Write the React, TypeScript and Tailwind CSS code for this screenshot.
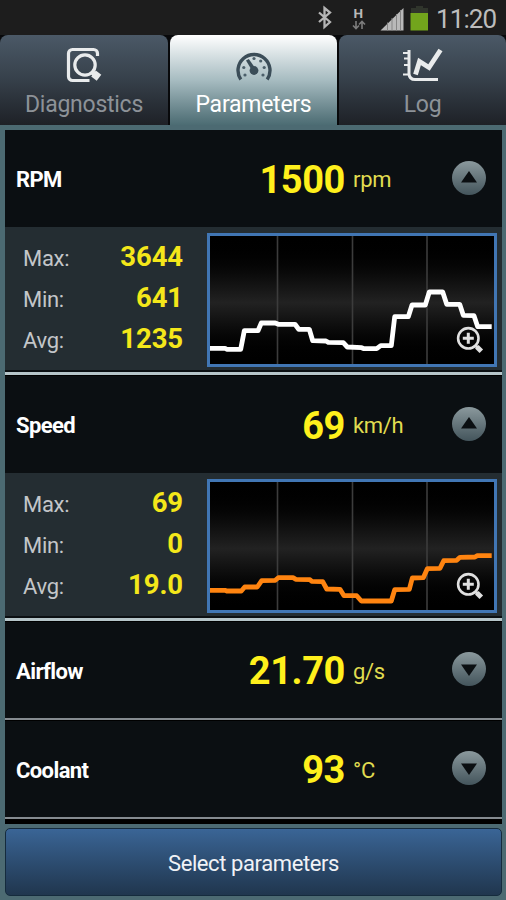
import React from "react";
import clsx from "clsx";

type Parameter = {
  name: string;
  value: string;
  unit: string;
  stats?: { label: string; value: string }[];
  stroke?: string;
  points?: string;
};

const PARAMETERS: Parameter[] = [
  {
    name: "RPM",
    value: "1500",
    unit: "rpm",
    stats: [
      { label: "Max:", value: "3644" },
      { label: "Min:", value: "641" },
      { label: "Avg:", value: "1235" }
    ],
    stroke: "#ffffff",
    points:
      "3,115.3 18,115.3 19.7,116.3 33.7,116.3 37.3,97.7 51,97.7 54.3,90 68.3,90 71.3,91.3 88,91.3 91.7,96.3 102.3,96.3 105.7,107.7 119,108 121.3,109.3 136.3,109.7 140.3,114 154.7,114.7 157,115.7 169.7,115.7 173.7,112.7 184.3,112.7 187.7,83.7 201.3,83.7 205,72 218.3,72 222.3,59 235.7,59 239.7,71.3 252.7,71.3 256.3,82.3 267,82.7 270.7,93.7 284.7,93.7"
  },
  {
    name: "Speed",
    value: "69",
    unit: "km/h",
    stats: [
      { label: "Max:", value: "69" },
      { label: "Min:", value: "0" },
      { label: "Avg:", value: "19.0" }
    ],
    stroke: "#ff8410",
    points:
      "3,111.3 18,111.3 19.7,112 34.3,112 37.7,108 50.3,108 54.7,101.7 68.3,101.3 71.3,98.7 86.3,98.7 88.7,100.3 103,100.7 104.7,102.3 115.7,102.7 119.7,110 133,110.3 137,116.7 149.7,116.7 154.3,122 184.3,122 187.7,110.7 202.3,110.3 205.3,99 216.3,98.7 220.3,89.7 233,89.3 236.7,81.7 249.7,81.3 253,78.3 268,78 270.3,76.7 284.7,76.7"
  },
  { name: "Airflow", value: "21.70", unit: "g/s" },
  { name: "Coolant", value: "93", unit: "°C" }
];

function DiagnosticsIcon() {
  return (
    <svg width="36" height="36" viewBox="0 0 36 36" fill="none">
      <path d="M31.500 9V6.500a4 4 0 0 0-4-4H6.500a4 4 0 0 0-4 4V29.500a4 4 0 0 0 4 4h17" stroke="#e9ebec" strokeWidth="3.200" />
      <circle cx="19" cy="18" r="10.200" stroke="#e9ebec" strokeWidth="3.200" />
      <path d="M26 25l3 2.800" stroke="#e9ebec" strokeWidth="4.500" />
      <path d="M27.500 26.500l5.500 4.200" stroke="#e9ebec" strokeWidth="7.600" />
    </svg>
  );
}

function GaugeIcon() {
  return (
    <svg width="38" height="32" viewBox="0 0 38 32" fill="none">
      <path d="M5.800 30.500a16 16 0 1 1 26.400 0" stroke="#3b4d58" strokeWidth="3.400" />
      <circle cx="19" cy="21.500" r="4.400" fill="#3b4d58" />
      <path d="M11 11.500l2.800-1.600 6.700 9.500-3.500 2z" fill="#3b4d58" />
      <g fill="#4b5f6a">
        <circle cx="10" cy="26" r="1.600" />
        <circle cx="8.800" cy="18.500" r="1.600" />
        <circle cx="19" cy="9.500" r="1.600" />
        <circle cx="25.700" cy="12" r="1.600" />
        <circle cx="29.200" cy="18.500" r="1.600" />
        <circle cx="28" cy="26" r="1.600" />
      </g>
    </svg>
  );
}

function LogIcon() {
  return (
    <svg width="40" height="34" viewBox="0 0 40 34" fill="none" stroke="#e9ebec">
      <path d="M6 2v24q.5 5.500 6 5.500h23" strokeWidth="3" />
      <path d="M0 5h6M1 10.500h5M1 17h5M0 26.500h7" strokeWidth="2.200" />
      <path d="M12.500 26.500L16.500 13.500 26 19.500 37.500 2" strokeWidth="4.800" />
    </svg>
  );
}

const TABS = [
  { label: "Diagnostics", icon: DiagnosticsIcon },
  { label: "Parameters", icon: GaugeIcon, active: true },
  { label: "Log", icon: LogIcon }
];

function StatusBar() {
  return (
    <div className="flex h-[35px] justify-end bg-[#1d1d1d] pt-[3px] pr-[9px]">
      <svg width="120" height="28" viewBox="0 0 120 28" fill="none">
        {/* bluetooth */}
        <path d="M4 9.500l11 9.500-5.500 5v-19L15 9.500 4 19" stroke="#b5b5b5" strokeWidth="2.300" />
        {/* mobile data arrows */}
        <g stroke="#7d7d7d" strokeWidth="1.600">
          <path d="M41 18v7.500M38 22.500l3 3 3-3" />
          <path d="M47 26v-7.500M44 21.500l3-3 3 3" />
        </g>
        {/* signal */}
        <path d="M65.500 27.500L88.500 5v22.500z" fill="#b9b9b9" />
        <path d="M72.500 19.500v8M77 15v12.500M81.500 11v16.500M85.500 7v20.500" stroke="#858585" strokeWidth="1" />
        {/* battery */}
        <path d="M101 3h7v2h5v5H96V5h5z" fill="#30352c" />
        <path d="M95.500 10h17.500v17.500h-17.500z" fill="#72a51c" />
        <text x="38.500" y="14.500" fontSize="13.500" fontWeight="700" fontFamily="Roboto, sans-serif" fill="#b9b9b9">H</text>
      </svg>
      <span className="w-[62px] whitespace-nowrap pl-[1px] text-[26px] leading-[32px] tracking-[-0.9px] text-[#bcbcbc]">11:20</span>
    </div>
  );
}

function ZoomIcon() {
  return (
    <svg className="absolute right-[13px] bottom-[13px]" width="28" height="28" viewBox="0 0 28 28" fill="none" stroke="#e0e0e0">
      <circle cx="12.300" cy="12.300" r="10.200" strokeWidth="2.600" />
      <path d="M12.300 6.800v11M6.800 12.300h11" strokeWidth="3" />
      <path d="M19 19l2.500 2.500" strokeWidth="3" />
      <path d="M20.800 20.800l4.500 4.500" strokeWidth="5" />
    </svg>
  );
}

function Chart({ points, stroke }: { points?: string; stroke?: string }) {
  return (
    <div className="relative h-[134px] w-[290px] bg-linear-to-b from-black via-[#222222] via-52% to-black">
      <svg width="290" height="134" viewBox="0 0 290 134" fill="none">
        <path d="M70.500 3v128M145.500 3v128M220 3v128" stroke="#3c3c3c" strokeWidth="1.600" />
        <polyline points={points} stroke={stroke} strokeWidth="4.800" strokeLinejoin="round" />
        <rect x="1.500" y="1.500" width="287" height="131" stroke="#4176b4" strokeWidth="3" />
      </svg>
      <ZoomIcon />
    </div>
  );
}

function ToggleButton({ open }: { open: boolean }) {
  return (
    <button type="button" className="flex h-[34px] w-[34px] items-center justify-center rounded-full bg-linear-to-b from-[#8b999d] to-[#44555c]">
      <svg width="18" height="13" viewBox="0 0 18 13" fill="#0b0f12">
        {open ? <path d="M9 0l8 11.500H1z" /> : <path d="M9 13L1 1.500h16z" />}
      </svg>
    </button>
  );
}

function ParameterRow({ param }: { param: Parameter }) {
  const open = !!param.stats;
  return (
    <div>
      <div className={clsx("flex items-center bg-[#0b0f12]", open ? "h-[97px]" : "h-[96px]")}>
        <div className="flex w-[340px] items-center justify-between pt-[2px] pl-[11px]">
          <span className="text-[22px] font-bold tracking-[-0.6px] text-white">{param.name}</span>
          <span className="text-[38px] leading-[44px] font-bold tracking-[-0.4px] text-[#fff01c]">{param.value}</span>
        </div>
        <span className="flex-1 pt-[2px] pl-[8px] text-[22px] tracking-[-0.3px] text-[#e0dc50]">{param.unit}</span>
        <div className="mr-[16px] pb-[2px]">
          <ToggleButton open={open} />
        </div>
      </div>
      {param.stats && (
        <div className="flex h-[144px] border-b border-[#0b0f12] bg-[#242d32]">
          <div className="flex w-[202px] flex-col pt-[9px] pr-[24px] pl-[18px]">
            {param.stats.map(stat => (
              <div key={stat.label} className="flex h-[41px] items-center justify-between">
                <span className="pt-[4px] text-[22px] tracking-[-0.3px] text-[#c3c6c9]">{stat.label}</span>
                <span className="pt-[1px] text-[27.500px] font-bold tracking-[-0.1px] text-[#f4e71a]">{stat.value}</span>
              </div>
            ))}
          </div>
          <div className="pt-[6px]">
            <Chart points={param.points} stroke={param.stroke} />
          </div>
        </div>
      )}
      <div className={clsx("border-b border-black", open ? "h-[5px] border-t border-t-[#0b0f12] bg-[#b6c5c9]" : "h-[3px] bg-[#858b90]")} />
    </div>
  );
}

export default function App() {
  return (
    <div className="flex h-[900px] w-[506px] flex-col overflow-hidden bg-[#4c6a72] font-[Roboto,sans-serif]">
      <StatusBar />

      <div className="grid h-[90px] grid-cols-[168px_167px_167px] gap-[2px] bg-[#08090b]">
        {TABS.map(tab => (
          <button
            key={tab.label}
            type="button"
            className={clsx(
              "flex flex-col items-center rounded-t-[8px] bg-linear-to-b",
              tab.active ? "from-white via-[#a7bcc1] to-[#4c6c73] text-white" : "from-[#4b5967] via-[#36404a] to-[#1e2127] text-[#8d9298]"
            )}
          >
            <span className="flex h-[56px] items-center justify-center pt-[4px]">
              <tab.icon />
            </span>
            <span className="text-[23px] leading-[27px] tracking-[-0.25px]">{tab.label}</span>
          </button>
        ))}
      </div>

      <div className="mt-[5px] mr-[4px] ml-[5px] h-[694px] overflow-hidden bg-black">
        {PARAMETERS.map(param => (
          <ParameterRow key={param.name} param={param} />
        ))}
      </div>

      <button
        type="button"
        className="mt-[4px] mr-[4px] ml-[5px] h-[68px] rounded-[5px] border border-[#152b3d] bg-linear-to-b from-[#3a6596] to-[#20364e] pt-[2px] text-[22px] tracking-[-0.4px] text-[#f0f2f6]"
      >
        Select parameters
      </button>
    </div>
  );
}
